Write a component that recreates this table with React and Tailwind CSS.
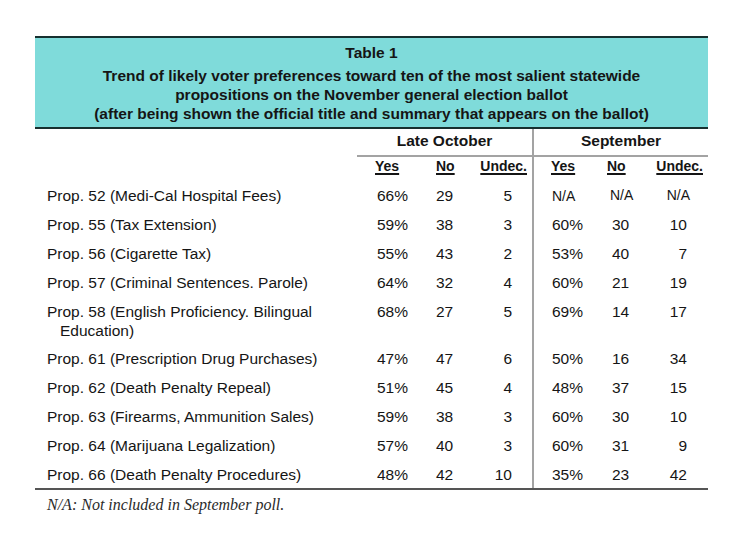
import React from "react";

const rows = [
  ["Prop. 52 (Medi-Cal Hospital Fees)", null, "66%", "29", "5", "N/A", "N/A", "N/A"],
  ["Prop. 55 (Tax Extension)", null, "59%", "38", "3", "60%", "30", "10"],
  ["Prop. 56 (Cigarette Tax)", null, "55%", "43", "2", "53%", "40", "7"],
  ["Prop. 57 (Criminal Sentences. Parole)", null, "64%", "32", "4", "60%", "21", "19"],
  ["Prop. 58 (English Proficiency. Bilingual", "Education)", "68%", "27", "5", "69%", "14", "17"],
  ["Prop. 61 (Prescription Drug Purchases)", null, "47%", "47", "6", "50%", "16", "34"],
  ["Prop. 62 (Death Penalty Repeal)", null, "51%", "45", "4", "48%", "37", "15"],
  ["Prop. 63 (Firearms, Ammunition Sales)", null, "59%", "38", "3", "60%", "30", "10"],
  ["Prop. 64 (Marijuana Legalization)", null, "57%", "40", "3", "60%", "31", "9"],
  ["Prop. 66 (Death Penalty Procedures)", null, "48%", "42", "10", "35%", "23", "42"],
];

function Cell({ value, kind }) {
  const na = value === "N/A";
  const size = na ? "text-[14px]" : "text-[15.5px]";
  if (kind === "loYes") return <div className={`w-[75px] pl-[20px] ${size}`}>{value}</div>;
  if (kind === "loNo") return <div className={`w-[38px] pl-[4px] ${size}`}>{value}</div>;
  if (kind === "loUnd") return <div className={`w-[62px] pr-[20px] text-right ${size}`}>{value}</div>;
  if (kind === "sYes")
    return (
      <div className={`w-[70px] border-l-2 border-[#a3a3a3] pl-[18px] ${size}`}>{value}</div>
    );
  if (kind === "sNo")
    return <div className={`w-[38px] ${na ? "pl-[8px]" : "pl-[10px]"} ${size}`}>{value}</div>;
  return (
    <div className={`w-[68px] text-right ${na ? "pr-[18px]" : "pr-[21px]"} ${size}`}>{value}</div>
  );
}

export default function App() {
  return (
    <div
      className="w-[750px] h-[542px] bg-white text-[#151515] overflow-hidden"
      style={{ fontFamily: '"Liberation Sans", Arial, sans-serif' }}
    >
      <div className="ml-[35px] w-[673px] pt-[36px]">
        {/* Title box */}
        <div className="bg-[#7fdbda] border-t-2 border-b-2 border-[#17302f] pt-[5px] pb-[4px] text-center font-bold text-[15.5px]">
          <div className="leading-[19px] mb-[4px]">Table 1</div>
          <div className="leading-[19px]">
            Trend of likely voter preferences toward ten of the most salient statewide
          </div>
          <div className="leading-[19px]">propositions on the November general election ballot</div>
          <div className="leading-[19px]">
            (after being shown the official title and summary that appears on the ballot)
          </div>
        </div>

        <div className="border-b-2 border-[#555]">
          {/* Group header */}
          <div className="flex font-bold text-[15.5px] leading-[18px]">
            <div className="w-[322px]" />
            <div className="w-[175px] pt-[3px] pb-[5px] text-center border-b-2 border-[#a3a3a3]">
              Late October
            </div>
            <div className="w-[176px] pt-[3px] pb-[5px] text-center border-b-2 border-l-2 border-[#a3a3a3]">
              September
            </div>
          </div>

          {/* Sub header */}
          <div className="flex font-bold text-[14px] leading-[17px]">
            <div className="w-[322px]" />
            <div className="w-[75px] pl-[18px] pt-[1px] pb-[5.5px]">
              <span className="underline decoration-[1.5px] underline-offset-2">Yes</span>
            </div>
            <div className="w-[38px] pl-[4px] pt-[1px] pb-[5.5px]">
              <span className="underline decoration-[1.5px] underline-offset-2">No</span>
            </div>
            <div className="w-[62px] pr-[5px] text-right pt-[1px] pb-[5.5px]">
              <span className="underline decoration-[1.5px] underline-offset-2">Undec.</span>
            </div>
            <div className="w-[70px] border-l-2 border-[#a3a3a3] pl-[17px] pt-[1px] pb-[5.5px]">
              <span className="underline decoration-[1.5px] underline-offset-2">Yes</span>
            </div>
            <div className="w-[38px] pl-[5px] pt-[1px] pb-[5.5px]">
              <span className="underline decoration-[1.5px] underline-offset-2">No</span>
            </div>
            <div className="w-[68px] pr-[5px] text-right pt-[1px] pb-[5.5px]">
              <span className="underline decoration-[1.5px] underline-offset-2">Undec.</span>
            </div>
          </div>

          {/* Data rows */}
          {rows.map((r, i) => (
            <div key={i} className="flex items-stretch leading-[19px]">
              <div className="w-[322px] pl-[12px] pt-[5px] pb-[4.8px] text-[15.5px]">
                <div>{r[0]}</div>
                {r[1] && <div className="pl-[13px]">{r[1]}</div>}
              </div>
              <div className="flex pt-[5px] pb-[4.8px]">
                <Cell value={r[2]} kind="loYes" />
                <Cell value={r[3]} kind="loNo" />
                <Cell value={r[4]} kind="loUnd" />
              </div>
              <div className="flex border-l-2 border-[#a3a3a3] pt-[5px] pb-[4.8px] -ml-0">
                <div className="w-[68px] pl-[18px] text-[15.5px]">
                  <span className={r[5] === "N/A" ? "text-[14px]" : ""}>{r[5]}</span>
                </div>
                <Cell value={r[6]} kind="sNo" />
                <Cell value={r[7]} kind="sUnd" />
              </div>
            </div>
          ))}
        </div>

        <div
          className="mt-[5.5px] pl-[12px] italic text-[16px] leading-[18px] text-[#2a2a2a]"
          style={{ fontFamily: '"Liberation Serif", "Times New Roman", serif' }}
        >
          N/A: Not included in September poll.
        </div>
      </div>
    </div>
  );
}
